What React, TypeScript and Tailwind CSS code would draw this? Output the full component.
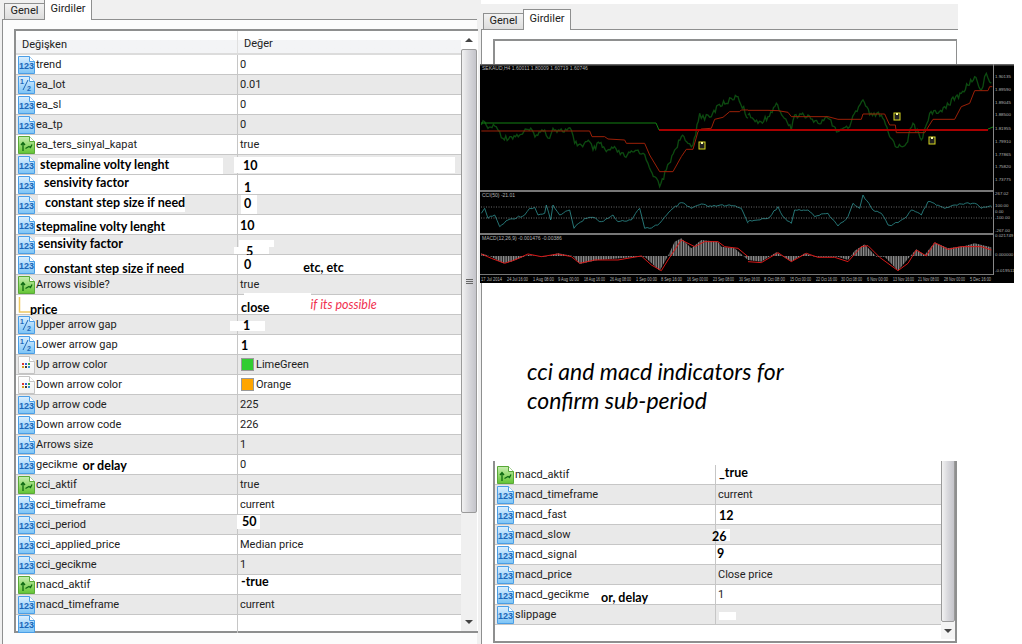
import type { ReactNode } from 'react'

type Kind = 'int' | 'half' | 'bool' | 'color' | 'mark'

type RowData = {
  kind: Kind
  name?: ReactNode
  value?: ReactNode
  swatch?: string
  extra?: ReactNode
}

// text typed over the screenshot by hand, heavier face than the grid
const paste = "self-start whitespace-nowrap font-['Lato',sans-serif] text-[12.5px] leading-[14px] font-bold text-black"

function Icon({ kind }: { kind: Kind }) {
  if (kind === 'mark') {
    return (
      <svg width="17" height="18" viewBox="0 0 17 18" className="shrink-0">
        <path d="M1.5 1V16H13" fill="none" stroke="#eec860" strokeWidth="1.5" />
      </svg>
    )
  }
  const top = kind === 'bool' ? '#c8eeb0' : kind === 'color' ? '#ffffff' : '#dcefff'
  const low = kind === 'bool' ? '#62c432' : kind === 'color' ? '#f0f0f0' : '#7cc4f6'
  const edge = kind === 'bool' ? '#58a838' : kind === 'color' ? '#c4c4c4' : '#4a9ee6'
  return (
    <svg width="17" height="18" viewBox="0 0 17 18" className="shrink-0">
      <defs>
        <linearGradient id={`doc-${kind}`} x1="0" y1="0" x2="0" y2="1">
          <stop offset="0" stopColor={top} />
          <stop offset="1" stopColor={low} />
        </linearGradient>
      </defs>
      <path d="M.5.5H11.5L16.5 5.5V17.5H.5Z" fill={`url(#doc-${kind})`} stroke={edge} />
      <path d="M11.5.5V5.5H16.5" fill="#fff" stroke={edge} />
      {kind === 'int' && (
        <text x="1" y="12.5" fontSize="8.5" fontWeight="700" fill="#1a66b8" fontFamily="'Liberation Sans', sans-serif" textLength="15" lengthAdjust="spacingAndGlyphs">
          123
        </text>
      )}
      {kind === 'half' && (
        <>
          <text x="2" y="8" fontSize="7" fontWeight="700" fill="#1a66b8" fontFamily="'Liberation Sans', sans-serif">1</text>
          <path d="M5 14L10 4" stroke="#1a66b8" />
          <text x="9" y="14.5" fontSize="7" fontWeight="700" fill="#1a66b8" fontFamily="'Liberation Sans', sans-serif">2</text>
        </>
      )}
      {kind === 'bool' && (
        <path d="M5 15V7M3 9L5 6.5 7 9M7.5 12.5L11 10.5 12.5 11.5 14 8.5" fill="none" stroke="#0e6a12" strokeWidth="1.3" />
      )}
      {kind === 'color' && (
        <>
          <rect x="4" y="7" width="2" height="2" fill="#d83030" />
          <rect x="7" y="7" width="2" height="2" fill="#3060d0" />
          <rect x="10" y="7" width="2" height="2" fill="#30a040" />
          <rect x="4" y="10" width="2" height="2" fill="#e0a020" />
          <rect x="7" y="10" width="2" height="2" fill="#404040" />
          <rect x="10" y="10" width="2" height="2" fill="#3090d0" />
        </>
      )}
    </svg>
  )
}

function Row({ row, index, nameWidth }: { row: RowData; index: number; nameWidth: string }) {
  return (
    <div
      className={`relative flex h-[20px] shrink-0 border-b border-[#c6c6c6] text-[11px] text-[#222] ${
        index % 2 === 0 ? 'bg-white' : 'bg-[#e9e9e9]'
      }`}
    >
      <div className={`flex h-full shrink-0 items-center border-r border-[#c6c6c6] pl-[2px] ${nameWidth}`}>
        <div className="mr-[1px] shrink-0">
          <Icon kind={row.kind} />
        </div>
        {typeof row.name === 'string' ? <span className="whitespace-nowrap pt-[1px]">{row.name}</span> : row.name}
      </div>
      <div className="flex h-full flex-1 items-center">
        {row.swatch && <span className={`ml-[3px] mr-[2px] h-[13px] w-[13px] border border-[#999] ${row.swatch}`} />}
        {typeof row.value === 'string' ? <span className={row.swatch ? 'pt-[1px]' : 'pl-[2px] pt-[1px]'}>{row.value}</span> : row.value}
      </div>
      {row.extra}
    </div>
  )
}

function Thumb() {
  return (
    <div className="flex flex-1 items-center justify-center rounded-[2px] border border-[#9a9a9a] bg-gradient-to-r from-[#f2f2f2] via-[#d8d8dc] to-[#c4c4ca]">
      <div className="flex flex-col gap-[1px]">
        <div className="h-[1px] w-[7px] bg-[#666]" />
        <div className="h-[1px] w-[7px] bg-[#666]" />
        <div className="h-[1px] w-[7px] bg-[#666]" />
      </div>
    </div>
  )
}

const arrowDown = 'mx-auto h-0 w-0 border-x-[4px] border-t-[4px] border-x-transparent border-t-[#444]'

const leftRows: RowData[] = [
  { kind: 'int', name: 'trend', value: '0' },
  { kind: 'half', name: 'ea_lot', value: '0.01' },
  { kind: 'int', name: 'ea_sl', value: '0' },
  { kind: 'int', name: 'ea_tp', value: '0' },
  { kind: 'bool', name: 'ea_ters_sinyal_kapat', value: 'true' },
  {
    kind: 'int',
    name: <span className={`${paste} ml-[2px] mt-[3px] h-[16px] w-[185px] shrink-0 bg-white pl-[2px]`}>stepmaline volty lenght</span>,
    value: <span className={`${paste} -ml-[4px] mt-[2px] h-[16px] w-[221px] shrink-0 bg-white pl-[9px] pt-[2px]`}>10</span>,
  },
  {
    kind: 'int',
    name: <span className={`${paste} ml-[2px] h-[17px] w-[164px] shrink-0 bg-white pl-[6px] pt-[1px]`}>sensivity factor</span>,
    value: <span className={`${paste} ml-[6px] mt-[6px]`}>1</span>,
  },
  {
    kind: 'int',
    name: <span className={`${paste} ml-[2px] h-[17px] w-[147px] shrink-0 bg-white pl-[7px] pt-[1px]`}>constant step size if need</span>,
    value: <span className={`${paste} ml-[3px] h-[19px] w-[16px] bg-white pl-[3px] pt-[2px]`}>0</span>,
  },
  {
    kind: 'int',
    name: <span className={`${paste} mt-[5px]`}>stepmaline volty lenght</span>,
    value: <span className={`${paste} ml-[2px] mt-[4px]`}>10</span>,
  },
  {
    kind: 'int',
    name: <span className={`${paste} -ml-[1px] mt-[2px] h-[13px] w-[35px] shrink-0 bg-white pl-[3px]`}>sensivity factor</span>,
    value: (
      <div className="-ml-[4px] mt-[5px] self-start">
        <div className="ml-[5px] h-[7px] w-[35px] bg-white" />
        <div className={`${paste} h-[7px] w-[35px] bg-white pl-[12px] pt-[1px] !leading-[7px]`}>5</div>
      </div>
    ),
  },
  {
    kind: 'int',
    name: <span className={`${paste} ml-[8px] mt-[7px]`}>constant step size if need</span>,
    value: (
      <>
        <span className={`${paste} ml-[6px] mt-[3px]`}>0</span>
        <span className={`${paste} ml-[52px] mt-[6px]`}>etc, etc</span>
      </>
    ),
  },
  { kind: 'bool', name: 'Arrows visible?', value: 'true' },
  {
    kind: 'mark',
    name: <span className={`${paste} -ml-[6px] mt-[8px]`}>price</span>,
    value: (
      <>
        <span className={`${paste} ml-[3px] mt-[6px]`}>close</span>
        <span className="ml-[41px] mt-[3px] self-start whitespace-nowrap font-['Lato',sans-serif] text-[12.5px] leading-[14px] italic text-[#f0304f]">if its possible</span>
      </>
    ),
    extra: <div className="absolute -top-[2px] left-[228px] h-[4px] w-[67px] bg-white" />,
  },
  {
    kind: 'half',
    name: 'Upper arrow gap',
    value: <span className={`${paste} -ml-[8px] mt-[6px] h-[10px] w-[35px] bg-white pl-[13px] !leading-[10px]`}>1</span>,
  },
  {
    kind: 'half',
    name: 'Lower arrow gap',
    value: <span className={`${paste} ml-[3px] mt-[4px]`}>1</span>,
  },
  { kind: 'color', name: 'Up arrow color', value: 'LimeGreen', swatch: 'bg-[#32cd32]' },
  { kind: 'color', name: 'Down arrow color', value: 'Orange', swatch: 'bg-[#ffa500]' },
  { kind: 'int', name: 'Up arrow code', value: '225' },
  { kind: 'int', name: 'Down arrow code', value: '226' },
  { kind: 'int', name: 'Arrows size', value: '1' },
  {
    kind: 'int',
    name: (
      <>
        <span className="pt-[1px]">gecikme</span>
        <span className={`${paste} ml-[5px] mt-[4px]`}>or delay</span>
      </>
    ),
    value: '0',
  },
  { kind: 'bool', name: 'cci_aktif', value: 'true' },
  { kind: 'int', name: 'cci_timeframe', value: 'current' },
  {
    kind: 'int',
    name: 'cci_period',
    value: <span className={`${paste} -ml-[1px] h-[14px] w-[23px] bg-white pl-[5px]`}>50</span>,
  },
  { kind: 'int', name: 'cci_applied_price', value: 'Median price' },
  { kind: 'int', name: 'cci_gecikme', value: '1' },
  {
    kind: 'bool',
    name: 'macd_aktif',
    value: <span className={`${paste} ml-[3px]`}>-true</span>,
  },
  { kind: 'int', name: 'macd_timeframe', value: 'current' },
]

const rightRows: RowData[] = [
  {
    kind: 'bool',
    name: 'macd_aktif',
    value: <span className={`${paste} ml-[3px] mt-[1px]`}>_true</span>,
  },
  { kind: 'int', name: 'macd_timeframe', value: 'current' },
  {
    kind: 'int',
    name: 'macd_fast',
    value: <span className={`${paste} ml-[3px] mt-[4px]`}>12</span>,
  },
  {
    kind: 'int',
    name: 'macd_slow',
    value: (
      <div className="relative -ml-[4px] mt-[5px] self-start">
        <div className="absolute -top-[1px] left-[5px] h-[12px] w-[13px] bg-white" />
        <span className={`${paste} relative block`}>26</span>
      </div>
    ),
  },
  {
    kind: 'int',
    name: 'macd_signal',
    value: <span className={`${paste} ml-[1px] mt-[2px]`}>9</span>,
  },
  { kind: 'int', name: 'macd_price', value: 'Close price' },
  {
    kind: 'int',
    name: (
      <>
        <span className="pt-[1px]">macd_gecikme</span>
        <span className={`${paste} ml-[12px] mt-[6px]`}>or, delay</span>
      </>
    ),
    value: '1',
  },
  {
    kind: 'int',
    name: 'slippage',
    value: <div className="ml-[3px] mt-[7px] h-[8px] w-[17px] self-start bg-white" />,
  },
]

// small jitter so the price line looks like a real quote series
function jag(points: number[][], amp: number, step: number) {
  const out: string[] = []
  let seed = 1
  points.forEach((p, i) => {
    const next = points[i + 1]
    out.push(`${p[0]},${p[1]}`)
    if (!next) return
    const steps = Math.max(1, Math.floor(Math.abs(next[0] - p[0]) / step))
    for (let s = 1; s < steps; s++) {
      seed += 1
      const r = Math.sin(seed * 12.9898) * 43758.5453
      const off = (r - Math.floor(r) - 0.5) * amp * 2
      const x = p[0] + ((next[0] - p[0]) * s) / steps
      const y = p[1] + ((next[1] - p[1]) * s) / steps + off
      out.push(`${x.toFixed(1)},${y.toFixed(1)}`)
    }
  })
  return out.join(' ')
}

const pts = (points: number[][]) => points.map((p) => p.join(',')).join(' ')

const priceL = [[10,195],[20,185],[30,205],[50,198],[65,215],[75,235],[100,230],[125,225],[150,208],[175,225],[200,210],[215,235],[225,205],[245,212],[280,210],[290,250],[310,255],[335,245],[345,270],[365,250],[385,275],[405,265],[440,290],[480,270],[495,280],[510,310],[530,350],[545,380],[565,330],[590,270],[610,230],[630,250],[645,255],[665,160],[680,180],[690,165],[700,170],[720,135],[745,130],[760,115],[780,110],[810,175]]
const priceR = [[0,165],[30,190],[60,170],[85,130],[105,170],[130,210],[140,165],[180,165],[210,190],[240,175],[270,215],[300,205],[310,185],[345,120],[365,165],[400,165],[425,230],[450,262],[475,250],[495,190],[520,240],[545,160],[570,160],[590,140],[640,100],[680,50],[700,90],[715,40],[730,70]]
const redL = [[10,213],[335,213],[342,230],[380,230],[390,237],[440,240],[445,250],[500,250],[515,285],[545,335],[585,335],[610,290],[625,268],[645,268],[660,215],[670,207],[700,205],[710,178],[735,172],[755,155],[785,155],[790,150],[810,150]]
const redR = [[0,151],[60,151],[90,152],[120,157],[130,170],[240,170],[270,178],[340,178],[345,162],[410,162],[425,195],[442,195],[445,218],[530,218],[555,178],[620,178],[640,140],[665,130],[680,92],[720,92],[725,80],[733,80]]
const cciL = [[10,460],[20,445],[30,475],[50,465],[65,500],[90,480],[140,465],[155,445],[170,442],[180,465],[200,460],[205,435],[218,480],[225,435],[245,465],[275,450],[288,505],[320,475],[345,472],[370,485],[405,465],[420,485],[460,480],[485,445],[500,505],[515,505],[545,490],[580,450],[610,428],[640,445],[670,432],[690,440],[720,437],[760,437],[790,445],[810,490]]
const cciR = [[0,485],[30,480],[60,475],[90,440],[105,470],[130,490],[140,450],[180,450],[200,470],[240,460],[270,498],[300,470],[315,430],[335,445],[345,405],[375,450],[400,460],[420,495],[430,497],[470,475],[490,450],[520,465],[540,425],[590,445],[640,432],[680,430],[700,445],[730,438]]
const histL = [[10,580],[40,590],[75,610],[100,605],[150,585],[200,590],[240,580],[285,588],[305,612],[360,600],[480,590],[500,590],[545,632],[570,588],[590,545],[610,535],[640,565],[670,540],[720,545],[730,560],[770,565],[810,600]]
const histR = [[0,600],[40,605],[85,577],[130,605],[170,580],[200,590],[270,590],[300,600],[320,572],[350,553],[385,590],[410,590],[450,632],[485,590],[505,568],[530,585],[560,547],[600,565],[650,558],[680,550],[730,562]]
const sigL = [[10,582],[40,595],[80,610],[110,600],[150,582],[190,590],[240,582],[280,590],[305,610],[350,600],[420,600],[490,588],[520,615],[550,632],[570,600],[610,540],[650,560],[680,545],[720,545],[740,560],[780,565],[810,590]]
const sigR = [[0,605],[40,608],[90,578],[130,605],[175,580],[210,592],[260,592],[300,605],[340,560],[360,557],[395,592],[450,632],[480,610],[505,570],[535,588],[560,548],[600,568],[640,560],[700,560],[730,570]]

const timeLabels: [number, string][] = [
  [1, '17 Jul 2014'], [27, '24 Jul 16:00'], [53, '1 Aug 08:00'], [78, '9 Aug 00:00'], [104, '18 Aug 16:00'], [130, '26 Aug 08:00'], [156, '1 Sep 00:00'], [181, '8 Sep 16:00'], [207, '16 Sep 00:00'], [233, '23 Sep 08:00'], [259, '30 Sep 16:00'], [284, '8 Oct 08:00'], [310, '15 Oct 00:00'], [336, '22 Oct 16:00'], [361, '30 Oct 08:00'], [387, '6 Nov 00:00'], [413, '13 Nov 16:00'], [438, '21 Nov 08:00'], [464, '28 Nov 00:00'], [490, '5 Dec 16:00'],
]
const axisLabels: [number, string][] = [
  [14, '1.90135'], [27, '1.89590'], [40, '1.89045'], [52, '1.88500'], [66, '1.81955'], [79, '1.79910'], [92, '1.77865'], [104, '1.75820'], [117, '1.73775'],
  [131, '267.02'], [143, '100.00'], [149, '0.00'], [155, '-100.00'], [168, '-267.00'],
  [173, '0.021749'], [192, '0.000000'], [208, '-0.019511'],
]

function Chart() {
  return (
    <svg width="534" height="219" viewBox="0 0 534 219" className="block">
      <defs>
        <pattern id="bars" width="5" height="10" patternUnits="userSpaceOnUse">
          <rect width="3" height="10" fill="#9a9a9a" />
        </pattern>
      </defs>
      <rect width="534" height="219" fill="#000" />
      <rect width="534" height="1.5" fill="#666" />
      <rect y="126" width="513" height="2" fill="#777" />
      <rect y="169" width="513" height="2" fill="#777" />
      <rect y="210" width="513" height="1" fill="#777" />
      <rect x="513" y="0" width="1" height="211" fill="#888" />

      {/* main, cci and macd curves, traced in 3x crop units */}
      {[
        { t: 'translate(-2,-4) scale(.3333)', price: priceL, red: redL, cci: cciL, hist: histL, sig: sigL },
        { t: 'translate(268,-4) scale(.3333)', price: priceR, red: redR, cci: cciR, hist: histR, sig: sigR },
      ].map((s) => (
        <g key={s.t} transform={s.t} fill="none">
          <polyline points={jag(s.price, 9, 4)} stroke="#0c4a10" strokeWidth="4" />
          <polyline points={pts(s.red)} stroke="#9c2008" strokeWidth="3" />
          <polyline points={jag(s.cci, 3, 6)} stroke="#2c8c8c" strokeWidth="2.5" />
          <polygon points={`${pts(s.hist)} ${s.hist[s.hist.length - 1][0]},588 ${s.hist[0][0]},588`} fill="url(#bars)" />
          <polyline points={pts(s.sig)} stroke="#d81818" strokeWidth="3" />
        </g>
      ))}

      <polyline points="179,66 508,66" fill="none" stroke="#a80000" strokeWidth="2" />
      <polyline points="1,59 176,59 179,66" fill="none" stroke="#128012" strokeWidth="1" />
      <polyline points="508,65 513,63" fill="none" stroke="#128012" strokeWidth="1" />
      <line x1="1" y1="143" x2="513" y2="143" stroke="#999" strokeWidth=".7" strokeDasharray="1 1.5" />
      <line x1="1" y1="154" x2="513" y2="154" stroke="#999" strokeWidth=".7" strokeDasharray="1 1.5" />

      {[[219, 78], [414, 49], [449, 73]].map(([x, y]) => (
        <g key={x}>
          <rect x={x} y={y} width="6" height="7" fill="#222" stroke="#d8d820" />
          <rect x={x + 2} y={y} width="2" height="2" fill="#ffffa0" />
        </g>
      ))}

      <g fontFamily="'Liberation Sans', sans-serif" fontSize="5" fill="#b4b4b4">
        <text x="2" y="6">SEKAUD,H4 1.60011 1.80009 1.60719 1.60746</text>
        <text x="2" y="133">CCI(50) -21.01</text>
        <text x="2" y="176">MACD(12,26,9) -0.001476 -0.00386</text>
        {timeLabels.map(([x, t]) => (
          <text key={t} x={x} y="217" textLength="21" lengthAdjust="spacingAndGlyphs">{t}</text>
        ))}
        {axisLabels.map(([y, t]) => (
          <text key={t} x="515" y={y} fontSize="4.4">{t}</text>
        ))}
      </g>
    </svg>
  )
}

function Tabs({ raised }: { raised: string }) {
  return (
    <div className={`flex items-end ${raised}`}>
      <div className="flex h-[16px] w-[41px] items-center justify-center border border-b-0 border-[#8e8f8f] bg-gradient-to-b from-[#f2f2f2] to-[#dddddd] text-[11px] text-[#222]">
        Genel
      </div>
      <div className="z-10 -mb-[1px] -ml-[1px] flex h-[21px] w-[48px] items-center justify-center border border-b-0 border-[#8e8f8f] bg-white pb-[2px] text-[11px] text-[#222]">
        Girdiler
      </div>
    </div>
  )
}

export default function App() {
  return (
    <div className="relative flex h-[644px] w-[1022px] overflow-hidden bg-white font-['Roboto',sans-serif]">
      {/* left dialog */}
      <div className="flex h-full w-[481px] shrink-0 flex-col bg-[#f0f0f0] pl-[2px]">
        <div className="h-[19px] pl-[2px]">
          <Tabs raised="h-[19px]" />
        </div>
        <div className="flex-1 w-[475px] border-l border-t border-[#8e8f8f] bg-[#fcfcfc] pl-[11px] pt-[9px]">
          <div className="flex h-[604px] w-[464px] border-b-2 border-l-2 border-t-2 border-[#8e8f8f] bg-white">
            <div className="flex w-[445px] shrink-0 flex-col">
              <div className="flex h-[24px] shrink-0 items-end border-b-2 border-[#dcdcdc] bg-gradient-to-b from-white from-40% to-[#f3f4f6] to-40% text-[11px] text-[#222]">
                <div className="h-full w-[222px] border-r border-[#e0e0e0] pl-[6px] pt-[6px]">Değişken</div>
                <div className="pl-[6px] pb-[1px]">Değer</div>
              </div>
              {leftRows.map((row, i) => (
                <Row key={i} row={row} index={i} nameWidth="w-[222px]" />
              ))}
              <div className="flex h-[18px] items-center">
                <div className="flex h-full w-[222px] items-start border-r border-[#c6c6c6] pl-[2px]">
                  <Icon kind="int" />
                </div>
              </div>
            </div>
            <div className="flex w-[16px] flex-col bg-[#f0f0f0]">
              <div className="flex h-[18px] items-center justify-center bg-white">
                <div className="h-0 w-0 border-x-[4px] border-b-[4px] border-x-transparent border-b-[#444]" />
              </div>
              <div className="flex h-[464px] shrink-0">
                <Thumb />
              </div>
              <div className="flex-1" />
              <div className="flex h-[18px] items-center">
                <div className={arrowDown} />
              </div>
            </div>
          </div>
        </div>
      </div>

      {/* right dialog */}
      <div className="flex h-full w-[477px] shrink-0 flex-col bg-white pt-[4px]">
        <div className="h-[25px] bg-[#f0f0f0] pl-[2px]">
          <Tabs raised="h-[25px]" />
        </div>
        <div className="flex-1 border-l border-t border-[#8e8f8f] bg-white pl-[11px] pt-[9px]">
          <div className="flex h-[604px] w-[464px] border-2 border-[#8e8f8f] bg-white">
            <div className="flex w-[446px] shrink-0 flex-col justify-end pb-[16px]">
              {rightRows.map((row, i) => (
                <Row key={i} row={row} index={i} nameWidth="w-[221px]" />
              ))}
            </div>
            <div className="flex w-[16px] flex-col pb-[2px]">
              <div className="flex flex-1">
                <Thumb />
              </div>
              <div className="flex h-[17px] items-center bg-[#f4f4f4]">
                <div className={arrowDown} />
              </div>
            </div>
          </div>
        </div>
      </div>

      {/* pasted chart and note lying over the right dialog */}
      <div className="absolute left-[940px] top-[41px] h-[24px] w-[16px] bg-white" />
      <div className="absolute left-[480px] top-[64px]">
        <Chart />
      </div>
      <div className="absolute left-[483px] top-[283px] h-[178px] w-[474px] bg-white pl-[44px] pt-[74px] font-['Lato',sans-serif] text-[23px] leading-[29px] italic text-black">
        <p>cci and macd indicators for</p>
        <p>confirm sub-period</p>
      </div>
    </div>
  )
}
